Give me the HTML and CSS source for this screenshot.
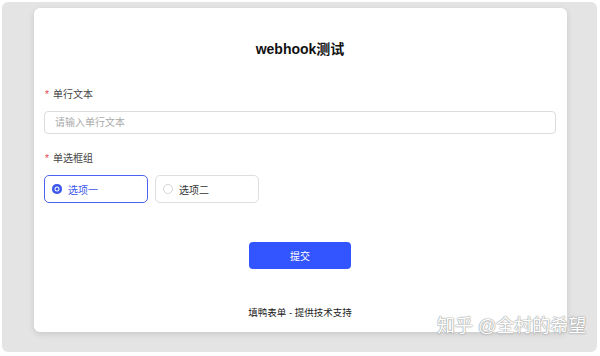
FILE: index.html
```html
<!DOCTYPE html>
<html lang="zh-CN">
<head>
  <meta charset="UTF-8">
  <title>webhook测试</title>
  <link rel="stylesheet" href="styles.css">
</head>
<body>
  <div class="frame">
    <div class="card">
      <h1 class="title">webhook测试</h1>

      <div class="field">
        <div class="label"><span class="star">*</span>单行文本</div>
        <input class="text-input" type="text" placeholder="请输入单行文本">
      </div>

      <div class="field radios-field">
        <div class="label"><span class="star">*</span>单选框组</div>
        <div class="radio-group">
          <label class="radio checked"><span class="dot"></span>选项一</label>
          <label class="radio"><span class="dot"></span>选项二</label>
        </div>
      </div>

      <div class="actions">
        <button class="submit">提交</button>
      </div>

      <p class="footer">填鸭表单 - 提供技术支持</p>
    </div>
  </div>

  <div class="watermark">知乎 @全村的希望</div>
</body>
</html>
```

FILE: styles.css
```css
body {
  margin: 0;
  padding: 2px 3px 0 2px;
  background: #fff;
  font-family: "Liberation Sans", "Noto Sans CJK SC", sans-serif;
  color: #222;
}

.frame {
  height: 350px;
  box-sizing: border-box;
  padding: 6px 30px 0 32px;
  background: #e4e4e4;
  border-radius: 6px;
}

.card {
  height: 324px;
  box-sizing: border-box;
  padding: 31px 11px 0 10px;
  background: #fff;
  border-radius: 6px;
  box-shadow: 0 2px 6px rgba(0,0,0,0.12);
}

.title {
  margin: 0;
  font-size: 14px;
  line-height: 20px;
  font-weight: 600;
  text-align: center;
  color: #111;
}

.field {
  margin-top: 27px;
}

.radios-field {
  margin-top: 16px;
}

.label {
  padding-top: 2px;
  font-size: 10px;
  line-height: 14px;
  color: #444;
}

.star {
  color: #e54545;
  margin-right: 4px;
  margin-left: 1px;
}

.text-input {
  display: block;
  width: 100%;
  height: 23px;
  box-sizing: border-box;
  margin-top: 9px;
  padding: 0 10px;
  border: 1px solid #dcdcdc;
  border-radius: 4px;
  font-family: inherit;
  font-size: 10px;
  outline: none;
}

.text-input::placeholder {
  color: #aaa;
}

.radio-group {
  display: flex;
  gap: 7px;
  margin-top: 9px;
}

.radio {
  display: flex;
  align-items: center;
  width: 104px;
  height: 28px;
  box-sizing: border-box;
  padding-left: 7px;
  border: 1px solid #dedede;
  border-radius: 5px;
  font-size: 10px;
  color: #333;
}

.radio .dot {
  width: 10px;
  height: 10px;
  box-sizing: border-box;
  margin-right: 6px;
  border: 1px solid #d6d6d6;
  border-radius: 50%;
}

.radio.checked {
  border-color: #4c63ef;
  color: #3a55ee;
}

.radio.checked .dot {
  border: none;
  background: #3a55ee;
  box-shadow: inset 0 0 0 2.5px #3a55ee, inset 0 0 0 3.5px #fff;
}

.actions {
  display: flex;
  justify-content: center;
  margin-top: 39px;
}

.submit {
  width: 102px;
  height: 27px;
  border: none;
  border-radius: 4px;
  background: #3355ff;
  color: #fff;
  font-family: inherit;
  font-size: 10px;
}

.footer {
  margin: 37px 0 0;
  font-size: 9.5px;
  line-height: 14px;
  text-align: center;
  color: #222;
}

.watermark {
  position: absolute;
  left: 437px;
  top: 314px;
  font-size: 18px;
  line-height: 24px;
  color: #fff;
  text-shadow: 0 0 1px #999, 0 0 1px #999, 0 0 2px rgba(0,0,0,0.25);
}
```
